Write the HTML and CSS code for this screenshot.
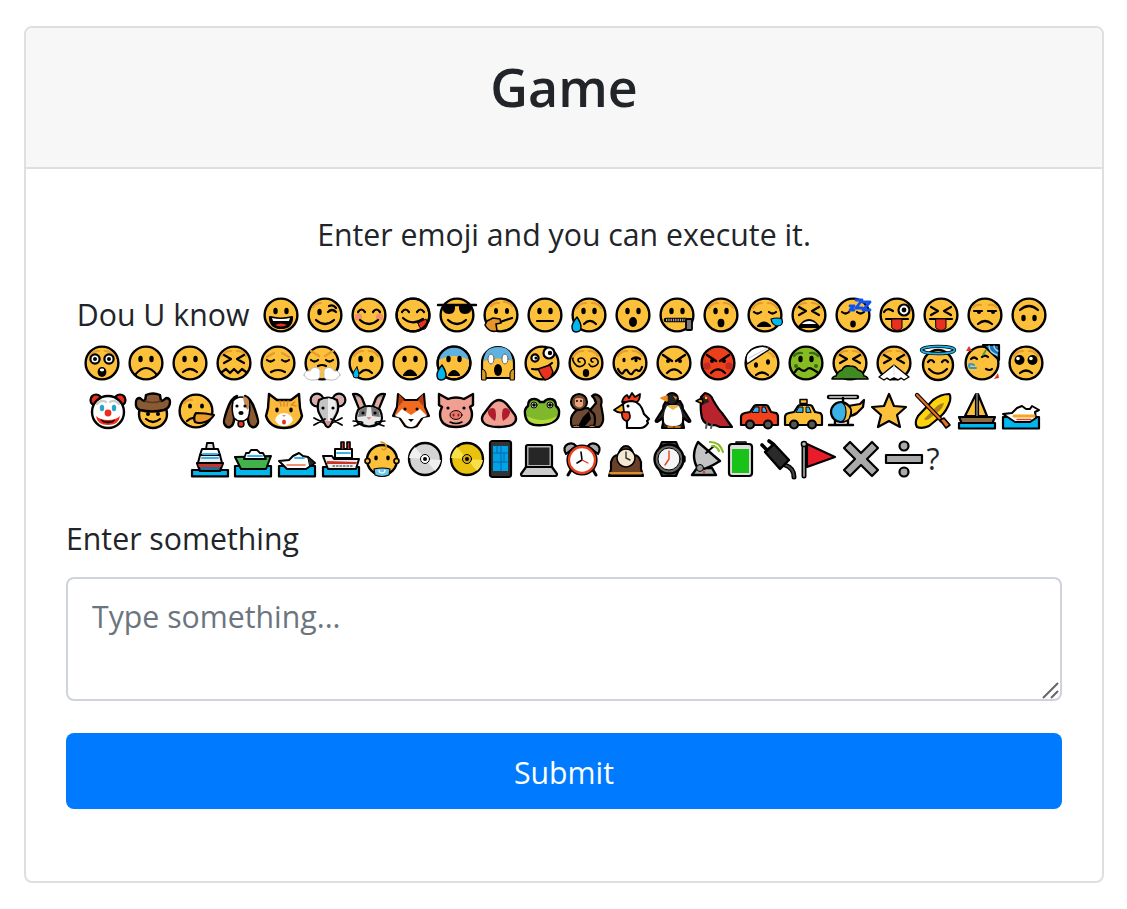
FILE: index.html
```html
<!DOCTYPE html>
<html lang="en">
<head>
<meta charset="utf-8">
<title>Game</title>
<link rel="stylesheet" href="styles.css">
</head>
<body>
<svg class="defs" aria-hidden="true"><defs>
<circle id="f" cx="18" cy="18" r="16.4" fill="#fcc03b" stroke-width="2.4"/>
<path id="br" d="M6 11q3-5 9-5M21 6q6 0 9 5" stroke="#e59c2f"/>
<g id="d" class="n" fill="#000"><ellipse cx="12.5" cy="14" rx="2.2" ry="3.2"/><ellipse cx="23.5" cy="14" rx="2.2" ry="3.2"/></g>
<path id="c" d="M7 15q3.5-5 7 0M22 15q3.5-5 7 0"/>
<path id="s" d="M7 15q3.5 3 7 0M22 15q3.5 3 7 0"/>
<path id="x" d="M8 10l7 4-7 4M28 10l-7 4 7 4"/>
<path id="sm" d="M9 23q9 8 18 0"/>
<path id="dr" d="M6 20q-5 6-5 10 0 5 4 5 5 0 5-5 0-4-4-10z" fill="#00b7f0" stroke-width="1.4"/>
<circle id="f2" cx="18" cy="18" r="16.4" stroke-width="2.4"/>
<g id="grin"><use href="#f"/><use href="#d"/><path d="M7 20q11 3 22 0 0 11-11 11T7 20z" fill="#000"/><path class="n" d="M9 21q9 2 18 0l-1 3H10z" fill="#fff"/><path class="n" d="M12 28q6-3 12 0-6 3-12 0z" fill="#e8321f"/></g>
<g id="wink"><use href="#f"/><path d="M6 10q3-4 8-4" stroke="#e59c2f"/><ellipse class="n" cx="12.5" cy="15" rx="2.2" ry="3.2" fill="#000"/><path d="M21 15q4-4 8 0M22 9q4-2 7 2"/><use href="#sm"/></g>
<g id="smile"><use href="#f"/><g class="n" fill="#f08f6c"><circle cx="7.5" cy="20" r="3.6"/><circle cx="28.5" cy="20" r="3.6"/></g><use href="#c"/><use href="#sm"/></g>
<g id="yum"><use href="#f"/><use href="#c"/><path d="M8 21q9 8 20 1"/><path d="M23 26l8-4q3 6-1 10-5 2-7-6z" fill="#e8321f" stroke-width="1"/><use href="#f2"/></g>
<g id="cool"><use href="#f"/><path d="M-1 8h38" stroke-width="2.4"/><path class="n" d="M3 8h13q1 9-6 9T3 8zM20 8h13q0 9-7 9t-6-9z" fill="#000"/><use href="#sm"/></g>
<g id="think"><use href="#f"/><path d="M8 9q3-4 8-3M21 5q5 0 8 4" stroke="#e59c2f"/><ellipse class="n" cx="13" cy="14" rx="2" ry="3" fill="#000"/><ellipse class="n" cx="24" cy="14" rx="2" ry="3" fill="#000"/><path d="M17 25l12-4"/><path d="M4 24l6-3 7 1 1 4-5 1 1 7q-8 2-12-6z" fill="#e4962a" stroke-width="1.6"/></g>
<g id="neutral"><use href="#f"/><use href="#d"/><path d="M10 24h16"/></g>
<g id="sadsw"><use href="#f"/><use href="#br"/><use href="#d"/><path d="M13 27q6-6 12 0"/><use href="#dr"/></g>
<g id="open"><use href="#f"/><use href="#d"/><ellipse class="n" cx="18" cy="25" rx="4" ry="5" fill="#000"/></g>
<g id="zip"><use href="#f"/><use href="#d"/><path d="M7 23h20" stroke-width="4.600"/><path d="M7 23h20" stroke="#aaa" stroke-width="2.400" stroke-dasharray="1.300 1" stroke-linecap="butt"/><rect x="27" y="22" width="6" height="11" rx="1" fill="#777" stroke-width="1.800"/></g>
<g id="hush"><use href="#f"/><use href="#br"/><use href="#d"/><ellipse class="n" cx="18" cy="26" rx="3.4" ry="4.2" fill="#000"/></g>
<g id="sleepy"><use href="#f"/><use href="#br"/><use href="#s"/><path d="M11 29q6-7 12 0z" fill="#000"/><path d="M24 22q6-2 11 0 2 7-5 7-5-1-6-7z" fill="#00b7f0" stroke-width="1.2"/></g>
<g id="tired"><use href="#f"/><use href="#br"/><use href="#x"/><path d="M8 30q10-14 20 0z" fill="#000"/><path class="n" d="M12 26q6-4 12 0l1 1H11z" fill="#fff"/></g>
<g id="sleep"><use href="#f"/><use href="#s"/><ellipse class="n" cx="18" cy="27" rx="2.8" ry="3.4" fill="#000"/><path d="M15 9h4l-4 4h4M21 3h6l-6 8h6M28 5h7l-7 8h7" stroke="#0f52f0" stroke-width="2.800"/></g>
<g id="tongw"><use href="#f"/><path d="M5 15q3-5 9-1"/><circle cx="25" cy="13" r="5.5" fill="#fff"/><circle class="n" cx="25" cy="13" r="2.4" fill="#000"/><path d="M7 22h22"/><path d="M13 22h10v9q-5 5-10 0z" fill="#e8321f" stroke-width="1"/></g>
<g id="tongx"><use href="#f"/><use href="#x"/><path d="M7 22h22"/><path d="M13 22h10v9q-5 5-10 0z" fill="#e8321f" stroke-width="1"/></g>
<g id="unam"><use href="#f"/><path d="M6 10q4-3 8-2M22 8q4-1 8 2" stroke="#e59c2f"/><path d="M7 14h8M21 14h8"/><circle class="n" cx="12" cy="15" r="2" fill="#000"/><circle class="n" cx="26" cy="15" r="2" fill="#000"/><path d="M11 27q7-6 14 0"/></g>
<g id="upside"><use href="#f"/><path d="M9 13q9-8 18 0"/><ellipse class="n" cx="12.5" cy="21" rx="2.2" ry="3.2" fill="#000"/><ellipse class="n" cx="23.5" cy="21" rx="2.2" ry="3.2" fill="#000"/></g>
<g id="aston"><use href="#f"/><use href="#br"/><circle cx="11" cy="14" r="4.6" fill="#fff"/><circle cx="25" cy="14" r="4.6" fill="#fff"/><circle class="n" cx="11" cy="14" r="2" fill="#000"/><circle class="n" cx="25" cy="14" r="2" fill="#000"/><ellipse class="n" cx="18" cy="27" rx="4.4" ry="5" fill="#000"/><ellipse class="n" cx="18" cy="25" rx="2.2" ry="1.4" fill="#fff"/></g>
<g id="frown"><use href="#f"/><use href="#d"/><path d="M7 30q11-14 22 0" stroke-width="2.2"/></g>
<g id="sfrown"><use href="#f"/><use href="#d"/><path d="M11 27q7-6 14 0"/></g>
<g id="conf"><use href="#f"/><use href="#br"/><use href="#x"/><path d="M6 27l4-3 4 4 4-4 4 4 4-4 4 3"/></g>
<g id="pens"><use href="#f"/><path d="M7 12l7-4M29 12l-7-4" stroke="#e59c2f"/><use href="#s"/><path d="M11 27q7-4 14 0"/></g>
<g id="steam"><use href="#f"/><path d="M7 6l8 5M29 6l-8 5" stroke="#e59c2f"/><use href="#s"/><path d="M14 21q4-2 8 0"/><path d="M0 30q1-5 6-4 2-5 8-3 3 1 2 6 1 6-6 6-7 1-10-5zM36 30q-1-5-6-4-2-5-8-3-3 1-2 6-1 6 6 6 7 1 10-5z" fill="#fff" stroke="#bbb" stroke-width="1"/></g>
<g id="cry"><use href="#f"/><use href="#br"/><use href="#d"/><path d="M12 28q6-6 12 0"/><path d="M9 22q-4 5-4 8 0 3 3 3t3-3q0-3-2-8z" fill="#00b7f0" stroke-width="1"/></g>
<g id="angu"><use href="#f"/><use href="#d"/><path d="M12 30q6-9 12 0z" fill="#000"/></g>
<g id="cold"><circle cx="18" cy="18" r="16.4" fill="#fcc03b"/><path class="n" d="M3 15q1-14 15-14t15 14q-15-8-30 0z" fill="#5fb2e0"/><use href="#f2"/><use href="#d"/><path d="M13 30q5-8 10 0z" fill="#000"/><use href="#dr"/></g>
<g id="scream"><path d="M2 18a16 16 0 0132 0v15H2z" fill="#fcc03b" stroke-width="2.2"/><path class="n" d="M4 16q0-14 14-14t14 14q-14-5-28 0z" fill="#5fb2e0"/><ellipse cx="11" cy="14" rx="3" ry="5" fill="#fff" stroke="#666" stroke-width="1"/><ellipse cx="25" cy="14" rx="3" ry="5" fill="#fff" stroke="#666" stroke-width="1"/><ellipse class="n" cx="18" cy="25" rx="4" ry="6" fill="#000"/><path d="M2 24q3 0 4 4v7H2zM34 24q-3 0-4 4v7h4z" fill="#d99a28" stroke-width="1"/></g>
<g id="zany"><use href="#f"/><circle cx="25" cy="8" r="5.5" fill="#fff"/><circle class="n" cx="26" cy="8" r="2.2" fill="#000"/><circle cx="11" cy="13" r="3.6" fill="#fff"/><circle class="n" cx="12" cy="13" r="1.6" fill="#000"/><path d="M8 24q11 2 20-6"/><path d="M14 24l12-4 3 7q-2 7-8 8-4-4-7-11z" fill="#e8321f" stroke-width="1.400"/></g>
<g id="dizzy"><use href="#f"/><use href="#br"/><path d="M12 17q-2 0-2-2t3-2 4 3-3 5-7-2-2-6M25 17q-2 0-2-2t3-2 4 3-3 5-6-2" stroke-width="1.600"/><ellipse class="n" cx="18" cy="28" rx="3.2" ry="4" fill="#000"/></g>
<g id="woozy"><use href="#f"/><use href="#br"/><ellipse class="n" cx="12" cy="15" rx="1.6" ry="2.2" fill="#000"/><path d="M20 14q4-3 8 0"/><ellipse class="n" cx="24" cy="15" rx="1.6" ry="2.2" fill="#000"/><path d="M6 24q3 6 5 4 2-4 4-3 3 5 5 4 3-5 5-4 3 3 5-3"/></g>
<g id="angry"><use href="#f"/><path d="M7 10l9 6M29 10l-9 6" stroke-width="2.4"/><g class="n" fill="#000"><circle cx="12" cy="16" r="2"/><circle cx="24" cy="16" r="2"/></g><path d="M11 28q7-7 14 0" stroke-width="2.2"/></g>
<g id="rage"><circle cx="18" cy="18" r="16.4" fill="#ec3f1c" stroke-width="2.4"/><g class="n" fill="#be2c22"><circle cx="7" cy="21" r="3.6"/><circle cx="29" cy="21" r="3.6"/></g><path d="M7 10l9 6M29 10l-9 6" stroke-width="2.4"/><g class="n" fill="#000"><circle cx="12" cy="16" r="2"/><circle cx="24" cy="16" r="2"/></g><path d="M11 28q7-7 14 0" stroke-width="2.2"/></g>
<g id="band"><use href="#f"/><path d="M24 7q3 1 6 5" stroke="#e59c2f"/><path d="M2 15q0-6 3-8 3-4 9-5 7-2 12 2L3 19z" fill="#fff" stroke-width="1.400"/><path d="M5 13l19-10" stroke="#ccc" stroke-width="1"/><ellipse class="n" cx="12" cy="20" rx="2" ry="2.8" fill="#000"/><ellipse class="n" cx="24" cy="17" rx="2" ry="2.8" fill="#000"/><path d="M12 30q6-5 12 0"/></g>
<g id="naus"><circle cx="18" cy="18" r="16.4" fill="#86bb22" stroke-width="2.4"/><path d="M6 11q3-4 8-3M22 8q5-1 8 3" stroke="#3a6a14"/><use href="#d"/><path d="M7 27q3-5 5-3 3 3 6 1 3-3 6-1 2 1 5 3"/><g class="n" fill="#3a6a14"><circle cx="8" cy="21" r="2"/><circle cx="28" cy="21" r="2"/></g></g>
<g id="vomit"><use href="#f"/><use href="#br"/><use href="#x"/><path d="M0 34q1-3 4-3 2-5 6-6 2-5 8-4 6 0 8 4 5 1 6 6 3 0 4 3z" fill="#3f8a22" stroke-width="1.6"/></g>
<g id="sneez"><use href="#f"/><use href="#br"/><use href="#x"/><path d="M3 32l15-12 15 12-5 3-3-2-3 2-4-2-4 2-3-2-3 2z" fill="#fff" stroke-width="1.400"/><path d="M18 20v10" stroke="#ddd" stroke-width="1"/></g>
<g id="halo"><circle cx="18" cy="20" r="15" fill="#fcc03b" stroke-width="2.4"/><ellipse cx="18" cy="5" rx="16.500" ry="3.600" stroke-width="3.400"/><ellipse cx="18" cy="5" rx="16.500" ry="3.600" stroke="#1eb0e6" stroke-width="1.800"/><path d="M8 17q3-4 6 0M22 17q3-4 6 0"/><path d="M9 24q9 9 18 0"/></g>
<g id="party"><use href="#f"/><path d="M19 0h16v15z" fill="#1e74b8"/><path d="M25 1q0 6 8 9M30 1q0 3 4 5" stroke="#a0d8f0" stroke-width="1.4"/><path d="M7 14q3-3 6 0M18 12q3-3 6 0"/><path d="M12 23H6q-2-3 0-4 3 0 4 1" stroke="#2b97d9" stroke-width="2"/><path d="M22 5l-3 5" stroke="#3aa33a" stroke-width="1.6"/><path class="n" d="M2 6l3-5 3 5zM30 34l5-1-1-5z" fill="#e8321f"/><path d="M22 24q4 2 6 0"/></g>
<g id="plead"><use href="#f"/><use href="#br"/><circle class="n" cx="11.5" cy="15" r="5" fill="#000"/><circle class="n" cx="24.5" cy="15" r="5" fill="#000"/><circle class="n" cx="10" cy="13.5" r="1.8" fill="#fff"/><circle class="n" cx="23" cy="13.5" r="1.8" fill="#fff"/><path d="M12 28q6-5 12 0"/></g>
<g id="clown"><circle cx="6" cy="7" r="5.500" fill="#f02c1c"/><circle cx="30" cy="7" r="5.500" fill="#f02c1c"/><circle cx="18" cy="19" r="16" fill="#fff" stroke-width="2.4"/><path d="M7 11q4-5 9-2M20 9q5-3 9 2" stroke="#ccc"/><g class="n" fill="#2aa4c8"><ellipse cx="12" cy="15" rx="2.2" ry="3.2"/><ellipse cx="24" cy="15" rx="2.2" ry="3.2"/></g><circle class="n" cx="18" cy="20" r="3.4" fill="#f02c1c"/><path class="n" d="M6 23q4 4 12 4t12-4q-1 9-12 9T6 23z" fill="#f02c1c"/><path d="M11 27q7 3 14 0-2 3-7 3t-7-3z" fill="#000" stroke-width=".6"/></g>
<g id="cowb"><circle cx="18" cy="21" r="14" fill="#fcc03b" stroke-width="2.4"/><path d="M1 9q0-4 4-4 3 3 5 3l1-6q7-3 14 0l1 6q2 0 5-3 4 0 4 4 0 6-6 8-12 3-24 0-5-2-4-8z" fill="#8a5a34" stroke-width="2.400"/><path d="M10 8q8 3 16 0" stroke="#5a3a20" stroke-width="1.4"/><g class="n" fill="#000"><circle cx="13" cy="21" r="2"/><circle cx="23" cy="21" r="2"/></g><path d="M11 26q7 6 14 0"/></g>
<g id="lie"><use href="#f"/><path d="M6 10q3-4 8-3" stroke="#e59c2f"/><g class="n" fill="#000"><ellipse cx="12" cy="13" rx="2" ry="2.6"/><ellipse cx="24" cy="13" rx="2" ry="2.6"/></g><path d="M9 28q4-4 8-3"/><path d="M18 20q10 0 18 2-3 5-9 7-6 2-10 0-2-5 1-9z" fill="#eb9b2a" stroke-width="2.200"/></g>
<g id="dog"><path d="M14 3Q8 5 4 17T1 30q2 5 6 4 4-2 4-8V8z" fill="#8a5a30" stroke-width="2.400"/><path d="M22 3q6 2 10 14t3 13q-2 5-6 4-4-2-4-8V8z" fill="#8a5a30" stroke-width="2.400"/><path d="M10 8q8-8 16 0 2 10-1 17-7 7-14 0-3-7-1-17z" fill="#fff" stroke-width="1.600"/><path class="n" d="M20 3q5 1 6 5 1 5-1 9-4-2-5-14z" fill="#c58a54"/><g class="n" fill="#000"><circle cx="14" cy="13" r="1.6"/><circle cx="22" cy="13" r="1.6"/><ellipse cx="18" cy="20" rx="2.6" ry="2"/></g><circle cx="18" cy="31" r="3" fill="#e8321f" stroke-width="1.4"/></g>
<g id="cat"><path d="M3 1l8 6h14l8-6 1 14 2 8q-4 12-18 12T0 23l2-8z" fill="#fcbb3d" stroke-width="2.4"/><path d="M14 8l1 5M18 8v5M22 8l-1 5M29 9l-4 3M26 12l4 1" stroke="#e08a22" stroke-width="1.4"/><path class="n" d="M9 27q2-7 9-7t9 7q-3 6-9 6t-9-6z" fill="#fff"/><g class="n" fill="#000"><ellipse cx="11" cy="17" rx="1.8" ry="2.4"/><ellipse cx="25" cy="17" rx="1.8" ry="2.4"/></g><path class="n" d="M16 22h4l-2 2z" fill="#e88a78"/><ellipse class="n" cx="18" cy="29" rx="2" ry="2.6" fill="#e8321f"/></g>
<g id="mouse"><circle cx="7" cy="7" r="6.4" fill="#bdbdbd" stroke-width="2.200"/><circle cx="29" cy="7" r="6.4" fill="#bdbdbd" stroke-width="2.200"/><circle class="n" cx="7" cy="7" r="3.6" fill="#eda3a0"/><circle class="n" cx="29" cy="7" r="3.6" fill="#eda3a0"/><path d="M9 7q9-5 18 0 3 9-1 15l-6 11q-2 2-4 0l-6-11q-4-6-1-15z" fill="#c4c4c4" stroke-width="2.200"/><path class="n" d="M18 5q4 1 7 3 2 8-1 14l-6 9z" fill="#ededed"/><g class="n" fill="#000"><circle cx="13" cy="15" r="1.6"/><circle cx="23" cy="15" r="1.6"/></g><path class="n" d="M15 28h6l-3 5z" fill="#e88a88"/><path d="M4 25l10 5M4 32l11-6M32 25l-10 5M32 32l-11-6" stroke-width="1.8"/></g>
<g id="rab"><path d="M9 18L2 1q6-1 9 4l4 10zM27 18l7-17q-6-1-9 4l-4 10z" fill="#8f8f8f" stroke-width="2.200"/><path class="n" d="M9 15L5 4q4 0 5 3l3 8zM27 15l4-11q-4 0-5 3l-3 8z" fill="#e8a8a0"/><path d="M7 17q11-8 22 0 4 9 0 13-11 7-22 0-4-4 0-13z" fill="#e8e8e8" stroke-width="2.200"/><path class="n" d="M8 18q4-4 8-4l-1 9-8 1zM28 18q-4-4-8-4l1 9 8 1z" fill="#757575"/><g class="n" fill="#000"><circle cx="12" cy="20" r="1.6"/><circle cx="24" cy="20" r="1.6"/></g><path class="n" d="M15.500 24h5l-2.500 3z" fill="#e88a88"/><path d="M2 28l9 1M3 33l9-3M34 28l-9 1M33 33l-9-3" stroke-width="1.4"/></g>
<g id="fox"><path d="M5 1l7 6h12l7-6 1 13 4 9-6 1-6 9q-6 3-12 0l-6-9-6-1 4-9z" fill="#f26a1e" stroke-width="2.200"/><path class="n" d="M2 23l7-7 9 6 9-6 7 7-6 2-6 8q-4 2-8 0l-6-8z" fill="#fff"/><path class="n" d="M6 1l5 6-5 6zM30 1l-5 6 5 6z" fill="#b8400f"/><g class="n" fill="#000"><circle cx="12" cy="16" r="1.5"/><circle cx="24" cy="16" r="1.5"/><path d="M15 26h6l-3 3z"/></g></g>
<g id="pig"><path d="M1 1l9 5q8-3 16 0l9-5v11l-3 2q2 4 2 7 0 13-16 13T2 21q0-3 2-7l-3-2z" fill="#f0a092" stroke-width="2.400"/><ellipse cx="18" cy="22" rx="6" ry="4.4" fill="#e8786c" stroke-width="1"/><g class="n" fill="#8a1c1c"><ellipse cx="15.500" cy="22" rx="1" ry="1.6"/><ellipse cx="20.500" cy="22" rx="1" ry="1.6"/></g><g class="n" fill="#000"><circle cx="10" cy="15" r="1.6"/><circle cx="26" cy="15" r="1.6"/></g><path d="M12 29q6 3 12 0" stroke-width="1.4"/></g>
<g id="snout"><path d="M18 7q5 0 10 7l6 8q2 4 0 7-3 5-16 5T2 29q-2-3 0-7l6-8q5-7 10-7z" fill="#f0a092" stroke-width="2.400"/><path class="n" d="M14 16q-4-3-7 2-1 5 7 10 2-6 0-12zM22 16q4-3 7 2 1 5-7 10-2-6 0-12z" fill="#b01c2c"/></g>
<g id="frog"><path d="M1 21q-1-5 3-8 0-7 6-7 4 0 6 3h4q2-3 6-3 6 0 6 7 4 3 3 8-1 9-17 11T1 21z" fill="#7fb82b" stroke-width="2.400"/><path class="n" d="M3 23q15 8 30 0-2 7-15 8T3 23z" fill="#b4d93a"/><circle cx="10" cy="12" r="3" fill="#ddd" stroke-width="1"/><circle cx="26" cy="12" r="3" fill="#ddd" stroke-width="1"/><circle class="n" cx="10" cy="12" r="1.800" fill="#000"/><circle class="n" cx="26" cy="12" r="1.800" fill="#000"/></g>
<g id="monk"><path d="M20 34h11q5-3 4-11-1-6-2-11 2-6-2-9-4-3-7 0 3 2 4 7l-5 6z" fill="#6e4a33" stroke-width="2.200"/><path d="M10 16q-8 6-7 13 0 5 3 5h20q2-8 0-13l-6-6z" fill="#6e4a33" stroke-width="2.200"/><circle cx="11" cy="9" r="8" fill="#6e4a33" stroke-width="2.200"/><path class="n" d="M7 6q4-2 8 0v6q-3 5-8 0z" fill="#eda27c"/><g class="n" fill="#000"><circle cx="9" cy="8" r="1"/><circle cx="13" cy="8" r="1"/><path d="M15 24l6-6 2 8-6 7h-7z"/></g><path d="M4 34q4-4 9 0zM20 34q4-4 8 0z" fill="#eda27c" stroke-width="1"/></g>
<g id="hen"><path d="M8 9q1-5 5-7l2 3 3-5 3 4 5-3q0 6-3 8z" fill="#f0401e" stroke-width="1.800"/><path d="M7 14q3-6 11-6 9 1 12 13l5 5-2 2 1 2q-3 5-8 5H13v-7q-5-6-6-14z" fill="#fff" stroke-width="2.200"/><path d="M9 11L0 17q5 4 10 2z" fill="#fcb71e" stroke-width="1.800"/><path d="M8 19q-1 7 4 9 6-1 3-9z" fill="#f0401e" stroke-width="1.600"/><circle class="n" cx="14" cy="13" r="1.500" fill="#000"/></g>
<g id="peng"><path d="M11 8q-3 4-3 8L1 27q-1 2 1 2l6-4v5l-1 5h22l-1-5v-5l6 4q2 0 1-2l-7-11q0-4-3-8z" fill="#222" stroke-width="2.200"/><circle cx="17" cy="6" r="6" fill="#222" stroke-width="2"/><path class="n" d="M12 13q6-2 12 0 4 8 3 15 0 5-9 5t-9-5q-1-8 3-15z" fill="#fff"/><path d="M12 3L6 5l6 3zM13 34h5M20 34h5" fill="#f08a1e" stroke="#f08a1e" stroke-width="1.600"/><path class="n" d="M18 3l4 1-1 3z" fill="#f08a1e"/><path class="n" d="M12 13q6-2 12 0l-6 4z" fill="#e8b84a"/></g>
<g id="card"><path d="M5 4l4-4q6 1 8 7l3 5q3 5 6 8l10 14H24l-5-2q-10 1-13-7-2-8-1-21z" fill="#b8232e" stroke-width="2.200"/><path class="n" d="M4 6q2-2 5-2 3 1 4 5l-5 2z" fill="#222"/><path d="M0 8l6-3 1 6z" fill="#f0a81e" stroke-width="1.400"/><circle class="n" cx="10" cy="5" r="1.200" fill="#fc0"/><path d="M11 30l-1 5M16 31l-1 4" stroke-width="2" stroke="#555"/></g>
<g id="car"><path d="M0 32v-8q0-3 4-4l5-1 4-6q1-1 3-1h8q2 0 3 1l3 6 5 1q2 1 2 4v8z" fill="#f0401e" stroke-width="2.200"/><path d="M11 19l3-5h4v5zM21 19v-5h3l2 5z" fill="#3ab2e8" stroke-width="1"/><circle cx="9" cy="31.500" r="4" fill="#555" stroke-width="2.200"/><circle cx="27" cy="31.500" r="4" fill="#555" stroke-width="2.200"/></g>
<g id="taxi"><path d="M0 32v-8q0-3 4-4l5-1 4-6q1-1 3-1h8q2 0 3 1l3 6 5 1q2 1 2 4v8z" fill="#fcc03b" stroke-width="2.200"/><rect x="15" y="6.500" width="7" height="4" fill="#fcc03b" stroke-width="1.500"/><path d="M11 19l3-5h4v5zM21 19v-5h3l2 5z" fill="#3ab2e8" stroke-width="1"/><circle cx="9" cy="31.500" r="4" fill="#555" stroke-width="2.200"/><circle cx="27" cy="31.500" r="4" fill="#555" stroke-width="2.200"/></g>
<g id="heli"><path d="M1 4h28" stroke-width="4.400"/><path d="M2 4h26" stroke="#aaa" stroke-width="2"/><path d="M15 5v6" stroke-width="2.400"/><path d="M1 32h24M7 27v5M20 27v5" stroke-width="2.400"/><path d="M20 13l12-2 4-4-1 7-6 6q-4 3-9 3z" fill="#fcc03b" stroke-width="2.200"/><circle cx="13" cy="19" r="10" fill="#3ab2e8" stroke-width="2.200"/><path d="M13 9q5 2 5 10t-5 10q5 0 8-3 2-5 2-9-3-6-10-8z" fill="#fcc03b" stroke-width="1.200"/></g>
<g id="star"><path d="M18 1l5 12 12 1-9 8 3 12-11-6-11 6 3-12-9-8 12-1z" fill="#fcc03b" stroke-width="2.200"/></g>
<g id="cano"><path d="M2 34q-3-4 1-11L18 7q8-6 16-6 2 1 1 7-3 10-10 16l-11 9q-7 3-12 1z" fill="#fcd30e" stroke-width="2.200"/><path class="n" d="M9 26l13-13q4-3 7-3-1 5-6 9l-9 7q-3 2-5 0z" fill="#a8801e"/><path d="M2 2l25 26" stroke-width="4.400"/><path d="M2 2l25 26" stroke="#e8701e" stroke-width="2.200"/><path d="M25 27l4-2 6 7-4 3z" fill="#e8701e" stroke-width="1.600"/></g>
<g id="sail"><path d="M17 1L6 23h11zM19 1l9 22h-9z" fill="#fcc03b" stroke-width="2.200"/><path d="M18 1v25" stroke="#888" stroke-width="1.400"/><path d="M0 24h36l-3 7H3z" fill="#8d6a46" stroke-width="2.200"/><rect x="0" y="30" width="36" height="5.500" fill="#00b7f0" stroke-width="2.200"/></g>
<g id="speed"><path d="M0 24h36v11.500H0z" fill="#00b7f0" stroke-width="2.200"/><path d="M0 21l9-1 5-5 5-2 4 3h4l2-3 7 4-4 2 1 6-6 4H12z" fill="#fff" stroke-width="2"/><path d="M11 23h20" stroke="#f5a623" stroke-width="3"/><path d="M14 26.500h14" stroke="#e8401e" stroke-width="1.400"/></g>
<g id="cruise"><rect x="0" y="29" width="36" height="6.400" fill="#00b7f0" stroke-width="2.200"/><path d="M5 22h26l-3 8H8z" fill="#1c6c96" stroke-width="2.200"/><path class="n" d="M6 23h24l-1 3H7z" fill="#c8332a"/><path d="M6 22l2-8h20l2 8z" fill="#eee" stroke-width="2"/><path d="M10 8h16l2 6H8z" fill="#fff" stroke-width="2"/><path d="M11 13h14M10 17h16" stroke="#3ab2e8" stroke-width="2"/><path d="M14 8l1-6h6l1 6z" fill="#ddd" stroke-width="1.800"/></g>
<g id="ferry"><rect x="0" y="25" width="36" height="10.400" fill="#00b7f0" stroke-width="2.200"/><path d="M0 16l36-1-5 13H6z" fill="#42b24a" stroke-width="2"/><path d="M9 18l2-6h3l2-3h6l3 3h3l3 6z" fill="#fff" stroke-width="1.800"/><path d="M13 15h14" stroke="#3ab2e8" stroke-width="1.800" stroke-dasharray="2 1"/></g>
<g id="motor"><rect x="0" y="25" width="36" height="10.400" fill="#00b7f0" stroke-width="2.200"/><path d="M0 20l10-1 4-4 6-3 4 3 5 1 7 6-9 6H8z" fill="#fff" stroke-width="2"/><path d="M16 17h9" stroke="#3ab2e8" stroke-width="1.800"/><path d="M8 24h18" stroke="#e87050" stroke-width="1.600"/><path d="M29 16l7 6-5 3z" fill="#222" stroke-width="1"/></g>
<g id="ship"><rect x="0" y="26" width="36" height="9.400" fill="#00b7f0" stroke-width="2.200"/><path d="M0 15h9l2 3h25l-3 10H5z" fill="#eee" stroke-width="2"/><path class="n" d="M4 20l30 1-1 2H4z" fill="#c8332a"/><path d="M12 17V8h17v9z" fill="#fff" stroke-width="2"/><path d="M14 12h13" stroke="#3ab2e8" stroke-width="1.800" stroke-dasharray="2 1"/><path d="M18 8V1h3v7M24 8V1h3v7" fill="#c8332a" stroke-width="1.600"/><path d="M10 25h20" stroke="#666" stroke-width="1.400" stroke-dasharray="1.500 2"/></g>
<g id="baby"><circle cx="18" cy="19" r="15" fill="#fcc03b" stroke-width="2.400"/><circle cx="3.500" cy="20" r="2.500" fill="#fcc03b" stroke-width="1.600"/><circle cx="32.500" cy="20" r="2.500" fill="#fcc03b" stroke-width="1.600"/><path d="M17 1q6 1 5 6-2 3-4 1" stroke="#d9902a" stroke-width="1.600"/><g class="n" fill="#000"><ellipse cx="12" cy="17" rx="1.800" ry="2.400"/><ellipse cx="24" cy="17" rx="1.800" ry="2.400"/></g><path d="M10 28q8-2 16 0l-1 6q-7 3-14 0z" fill="#6cc8e8" stroke-width="1.200"/><path d="M15 29q0 3 3 3t3-3" stroke="#fff" stroke-width="1.200"/></g>
<g id="disc"><circle cx="18" cy="18" r="16" fill="#d4d4d4" stroke-width="2.400"/><path class="n" d="M18 18L8 6q-5 5-6 11zM18 18l10 12q5-5 6-11z" fill="#f0f0f0"/><circle cx="18" cy="18" r="4.500" fill="#fff" stroke-width="1"/><circle class="n" cx="18" cy="18" r="2" fill="#000"/></g>
<g id="dvd"><circle cx="18" cy="18" r="16" fill="#e8c20e" stroke-width="2.400"/><path class="n" d="M18 18L8 6q-5 5-6 11zM18 18l10 12q5-5 6-11z" fill="#f8e04a"/><circle cx="18" cy="18" r="4.500" fill="#d8b00e" stroke-width="1"/><circle class="n" cx="18" cy="18" r="2" fill="#000"/></g>
<g id="phone"><rect x="7" y="0" width="21" height="36" rx="2.500" fill="#333" stroke-width="2.200"/><rect x="10" y="5" width="15" height="25" fill="#00a2e8" stroke="none"/><path d="M18 5v25M10 12h15M10 21h15M14 5v7M21 12v9" stroke="#0866a8" stroke-width="1"/></g>
<g id="lap"><path d="M6 6q0-2 2-2h22q2 0 2 2v20H6z" fill="#b9b9b9" stroke-width="2.200"/><rect x="8.500" y="6.500" width="21" height="17.500" fill="#262626" stroke="none"/><path d="M1 33l5-7h26l5 7q0 2-2 2H3q-2 0-2-2z" fill="#ccc" stroke-width="2.200"/></g>
<g id="alarm"><path d="M2 13q-4-7 2-10 5-2 8 2zM34 13q4-7-2-10-5-2-8 2z" fill="#aaa" stroke-width="2.200"/><path d="M7 29l-3 5M29 29l3 5" stroke-width="3"/><circle cx="18" cy="19" r="14.500" fill="#fff" stroke-width="2.200"/><circle cx="18" cy="19" r="13" stroke="#e8401e" stroke-width="2.400"/><path d="M17 11l1 8-5 3" stroke-width="1.600"/><path d="M18 19l6 3" stroke="#e8321f" stroke-width="1.200"/></g>
<g id="mant"><path d="M1 35h34l-2-7v-7q-2-7-7-7-3-9-8-9-5 0-8 9-5 0-7 7v7z" fill="#6b4028" stroke-width="2.200"/><circle cx="18" cy="17" r="9" fill="#f3e8d2" stroke-width="1.500"/><path d="M18 11v6l4 2" stroke="#333" stroke-width="1.400"/><path d="M2 32h32" stroke="#d9902a" stroke-width="1.800"/></g>
<g id="watch"><path d="M8 8l3-7h14l3 7zM8 28l3 7h14l3-7z" fill="#4a4a4a" stroke-width="2.200"/><circle cx="18" cy="18" r="14.500" fill="#666" stroke-width="2.400"/><circle cx="18" cy="18" r="11" fill="#f4f4f4" stroke-width="1"/><path d="M18 10v8l-4 6" stroke="#e8401e" stroke-width="1.400"/><path d="M33 16v4" stroke-width="3.400"/></g>
<g id="sat"><path d="M4 34h24l-4-7H9z" fill="#aaa" stroke-width="2.400"/><path d="M10 1q-8 14 0 27 6 2 22-8z" fill="#c4c4c4" stroke-width="2.400"/><circle cx="12" cy="27" r="3.500" fill="#999" stroke-width="1"/><path d="M18 12l8-7" stroke-width="1.800"/><path d="M22 1q10 0 13 10M24 5q5 0 7 5" stroke="#86bb22" stroke-width="2.200"/><circle class="n" cx="16" cy="31" r="1.200" fill="#e8321f"/></g>
<g id="batt"><rect x="13" y="1" width="10" height="4" fill="#888" stroke-width="1.500"/><rect x="6" y="3" width="23" height="32" rx="3" fill="#ddd" stroke-width="2.200"/><rect x="9" y="8" width="17" height="24" fill="#18c218" stroke="none"/></g>
<g id="plug"><path d="M24 24q9 3 9 12" stroke-width="5"/><path d="M24 24q9 3 9 12" stroke="#444" stroke-width="2"/><path d="M4 11l9-8 15 16-9 9z" fill="#2a2a2a" stroke-width="2.400"/><path d="M6 9L1 4M12 3L8 0" stroke-width="3.600"/></g>
<g id="flag"><path d="M7 3l28 13L7 26z" fill="#ea1c2c" stroke-width="2.200"/><path d="M4 5v30" stroke-width="5"/><path d="M4 5v30" stroke="#999" stroke-width="1.800"/><circle cx="4" cy="3" r="2.600" fill="#bbb" stroke-width="1.500"/></g>
<path id="xx" d="M7 1L1 7l11 11L1 29l6 6 11-11 11 11 6-6-11-11L35 7l-6-6-11 11z" fill="#aaa" stroke-width="2.200"/>
<g id="div"><circle cx="18" cy="5" r="4.500" fill="#aaa" stroke-width="2.200"/><circle cx="18" cy="31" r="4.500" fill="#aaa" stroke-width="2.200"/><rect x="0" y="14" width="36" height="8" fill="#aaa" stroke-width="2.200"/></g>
</defs></svg>
<main class="card">
<header class="card-header"><h1 class="title">Game</h1></header>
<section class="card-body">
<p class="intro">Enter emoji and you can execute it.</p>
<p class="emoji-line">Dou U know <svg class="e p2" viewBox="-4 -6 44 48"><use href="#grin"/></svg><svg class="e" viewBox="-4 -6 44 48"><use href="#wink"/></svg><svg class="e" viewBox="-4 -6 44 48"><use href="#smile"/></svg><svg class="e" viewBox="-4 -6 44 48"><use href="#yum"/></svg><svg class="e" viewBox="-4 -6 44 48"><use href="#cool"/></svg><svg class="e" viewBox="-4 -6 44 48"><use href="#think"/></svg><svg class="e" viewBox="-4 -6 44 48"><use href="#neutral"/></svg><svg class="e" viewBox="-4 -6 44 48"><use href="#sadsw"/></svg><svg class="e" viewBox="-4 -6 44 48"><use href="#open"/></svg><svg class="e" viewBox="-4 -6 44 48"><use href="#zip"/></svg><svg class="e" viewBox="-4 -6 44 48"><use href="#hush"/></svg><svg class="e" viewBox="-4 -6 44 48"><use href="#sleepy"/></svg><svg class="e" viewBox="-4 -6 44 48"><use href="#tired"/></svg><svg class="e" viewBox="-4 -6 44 48"><use href="#sleep"/></svg><svg class="e" viewBox="-4 -6 44 48"><use href="#tongw"/></svg><svg class="e" viewBox="-4 -6 44 48"><use href="#tongx"/></svg><svg class="e" viewBox="-4 -6 44 48"><use href="#unam"/></svg><svg class="e" viewBox="-4 -6 44 48"><use href="#upside"/></svg><svg class="e" viewBox="-4 -6 44 48"><use href="#aston"/></svg><svg class="e" viewBox="-4 -6 44 48"><use href="#frown"/></svg><svg class="e" viewBox="-4 -6 44 48"><use href="#sfrown"/></svg><svg class="e" viewBox="-4 -6 44 48"><use href="#conf"/></svg><svg class="e" viewBox="-4 -6 44 48"><use href="#pens"/></svg><svg class="e" viewBox="-4 -6 44 48"><use href="#steam"/></svg><svg class="e" viewBox="-4 -6 44 48"><use href="#cry"/></svg><svg class="e" viewBox="-4 -6 44 48"><use href="#angu"/></svg><svg class="e" viewBox="-4 -6 44 48"><use href="#cold"/></svg><svg class="e" viewBox="-4 -6 44 48"><use href="#scream"/></svg><svg class="e" viewBox="-4 -6 44 48"><use href="#zany"/></svg><svg class="e" viewBox="-4 -6 44 48"><use href="#dizzy"/></svg><svg class="e" viewBox="-4 -6 44 48"><use href="#woozy"/></svg><svg class="e" viewBox="-4 -6 44 48"><use href="#angry"/></svg><svg class="e" viewBox="-4 -6 44 48"><use href="#rage"/></svg><svg class="e" viewBox="-4 -6 44 48"><use href="#band"/></svg><svg class="e" viewBox="-4 -6 44 48"><use href="#naus"/></svg><svg class="e" viewBox="-4 -6 44 48"><use href="#vomit"/></svg><svg class="e" viewBox="-4 -6 44 48"><use href="#sneez"/></svg><svg class="e" viewBox="-4 -6 44 48"><use href="#halo"/></svg><svg class="e" viewBox="-4 -6 44 48"><use href="#party"/></svg><svg class="e" viewBox="-4 -6 44 48"><use href="#plead"/></svg><svg class="e" viewBox="-4 -6 44 48"><use href="#clown"/></svg><svg class="e p1" viewBox="-4 -6 44 48"><use href="#cowb"/></svg><svg class="e g1" viewBox="-4 -6 44 48"><use href="#lie"/></svg><svg class="e p1" viewBox="-4 -6 44 48"><use href="#dog"/></svg><svg class="e g1" viewBox="-4 -6 44 48"><use href="#cat"/></svg><svg class="e" viewBox="-4 -6 44 48"><use href="#mouse"/></svg><svg class="e g3" viewBox="-4 -6 44 48"><use href="#rab"/></svg><svg class="e g2" viewBox="-4 -6 44 48"><use href="#fox"/></svg><svg class="e p1" viewBox="-4 -6 44 48"><use href="#pig"/></svg><svg class="e g1" viewBox="-4 -6 44 48"><use href="#snout"/></svg><svg class="e g1" viewBox="-4 -6 44 48"><use href="#frog"/></svg><svg class="e" viewBox="-4 -6 44 48"><use href="#monk"/></svg><svg class="e p2" viewBox="-4 -6 44 48"><use href="#hen"/></svg><svg class="e g3" viewBox="-4 -6 44 48"><use href="#peng"/></svg><svg class="e g3" viewBox="-4 -6 44 48"><use href="#card"/></svg><svg class="e p1" viewBox="-4 -6 44 48"><use href="#car"/></svg><svg class="e" viewBox="-4 -6 44 48"><use href="#taxi"/></svg><svg class="e g1" viewBox="-4 -6 44 48"><use href="#heli"/></svg><svg class="e g1" viewBox="-4 -6 44 48"><use href="#star"/></svg><svg class="e" viewBox="-4 -6 44 48"><use href="#cano"/></svg><svg class="e" viewBox="-4 -6 44 48"><use href="#sail"/></svg><svg class="e" viewBox="-4 -6 44 48"><use href="#speed"/></svg><svg class="e" viewBox="-4 -6 44 48"><use href="#cruise"/></svg><svg class="e g1" viewBox="-4 -6 44 48"><use href="#ferry"/></svg><svg class="e" viewBox="-4 -6 44 48"><use href="#motor"/></svg><svg class="e" viewBox="-4 -6 44 48"><use href="#ship"/></svg><svg class="e g3" viewBox="-4 -6 44 48"><use href="#baby"/></svg><svg class="e g1" viewBox="-4 -6 44 48"><use href="#disc"/></svg><svg class="e g2" viewBox="-4 -6 44 48"><use href="#dvd"/></svg><svg class="e g10" viewBox="-4 -6 44 48"><use href="#phone"/></svg><svg class="e g7" viewBox="-4 -6 44 48"><use href="#lap"/></svg><svg class="e" viewBox="-4 -6 44 48"><use href="#alarm"/></svg><svg class="e" viewBox="-4 -6 44 48"><use href="#mant"/></svg><svg class="e g1" viewBox="-4 -6 44 48"><use href="#watch"/></svg><svg class="e g7" viewBox="-4 -6 44 48"><use href="#sat"/></svg><svg class="e g9" viewBox="-4 -6 44 48"><use href="#batt"/></svg><svg class="e g6" viewBox="-4 -6 44 48"><use href="#plug"/></svg><svg class="e g5" viewBox="-4 -6 44 48"><use href="#flag"/></svg><svg class="e g1" viewBox="-4 -6 44 48"><use href="#xx"/></svg><svg class="e g1" viewBox="-4 -6 44 48"><use href="#div"/></svg>?</p>
<form class="form">
<label class="label" for="q">Enter something</label>
<div class="field">
<textarea class="input" id="q" placeholder="Type something..."></textarea>
<svg class="grip" width="18" height="18" viewBox="0 0 18 18"><path d="M1 16L16 1M9 16l7-7"/></svg>
</div>
<button class="submit" type="button">Submit</button>
</form>
</section>
</main>
</body>
</html>
```

FILE: styles.css
```css
* { box-sizing: border-box; }
html, body { margin: 0; }
body {
  padding: 26px 23px 26px 24px;
  background: #fff;
  color: #212529;
  font-family: "Open Sans", "Noto Sans", "Liberation Sans", sans-serif;
  font-size: 30.25px;
  line-height: 48px;
}
.defs { display: block; width: 0; height: 0; }
.card { border: 2px solid #dfdfdf; border-radius: 8px; overflow: hidden; }
.card-header { height: 141px; padding-top: 25px; background: #f7f7f7; border-bottom: 2px solid #dfdfdf; }
.title { margin: 0; text-align: center; font-size: 52px; line-height: 68px; font-weight: 600; }
.card-body { padding: 42px 40px 72px; }
.intro, .emoji-line { margin: 0 0 32px; text-align: center; }
.e {
  width: 44px; height: 48px; vertical-align: top; overflow: visible;
  fill: none; stroke: #000; stroke-width: 2.2; stroke-linecap: round; stroke-linejoin: round;
}
.n { stroke: none; }
.p1 { margin-left: 1px; }
.p2 { margin-left: 2px; }
.g1 { margin-left: -1px; }
.g2 { margin-left: -2px; }
.g3 { margin-left: -3px; }
.g5 { margin-left: -5px; }
.g6 { margin-left: -6px; }
.g7 { margin-left: -7px; }
.g9 { margin-left: -9px; }
.g10 { margin-left: -10px; }
.label { display: block; margin-bottom: 14px; }
.field { position: relative; margin-bottom: 32px; height: 124px; }
.input {
  display: block; width: 100%; height: 124px; padding: 14px 24px 10px;
  border: 2px solid #ced4da; border-radius: 8px; resize: none; outline: none;
  font: inherit; color: #495057;
}
.input::placeholder { color: #6c757d; opacity: 1; }
.grip { position: absolute; right: 2px; bottom: 1px; fill: none; stroke: #666; stroke-width: 2; }
.submit {
  display: block; width: 100%; height: 76px; padding: 4px 0 0;
  border: 0; border-radius: 8px; background: #007bff; color: #fff; font: inherit;
}
```
